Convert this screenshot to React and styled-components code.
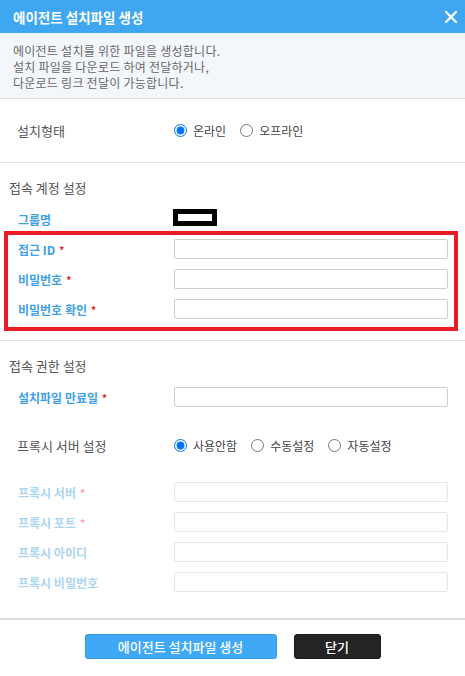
import React from "react";
import styled, { createGlobalStyle } from "styled-components";

const Global = createGlobalStyle`
  html, body { margin: 0; padding: 0; background: #fff; }
  body { font-family: "Noto Sans CJK KR", "Noto Sans", sans-serif; }
  * { box-sizing: border-box; }
`;

const Dialog = styled.div`
  width: 465px;
  height: 676px;
  background: #fff;
  display: flex;
  flex-direction: column;
`;

const Header = styled.div`
  height: 33px;
  background: #3fa7f1;
  display: flex;
  align-items: center;
  justify-content: space-between;
  padding: 0 8px 0 13px;
`;

const Title = styled.h1`
  margin: 0;
  font-size: 13.5px;
  font-weight: 700;
  color: #fff;
`;

const CloseBtn = styled.button`
  width: 12px;
  height: 12px;
  padding: 0;
  border: 0;
  background: none;
  display: flex;
  cursor: pointer;
`;

const Desc = styled.div`
  background: #f3f6fb;
  border-bottom: 1px solid #dcdcdc;
  padding: 10px 13px 7px;
  font-size: 12px;
  line-height: 16px;
  letter-spacing: 0.25px;
  color: #666;
`;

const Section = styled.section`
  position: relative;
  padding: ${(p) => p.$pad};
  border-bottom: ${(p) => (p.$last ? "none" : "1px solid #e0e0e0")};
`;

const SectionTitle = styled.h2`
  margin: 0 0 6px 9px;
  height: 20px;
  line-height: 20px;
  font-size: 13px;
  font-weight: 400;
  color: #555;
`;

const Row = styled.div`
  display: grid;
  grid-template-columns: 156px 1fr;
  align-items: center;
  height: 30px;
  padding: 0 17px 0 18px;
  margin-top: ${(p) => p.$mt || 0}px;
`;

const Label = styled.label`
  font-size: ${(p) => (p.$plain ? 13 : 12)}px;
  font-weight: ${(p) => (p.$plain ? 400 : 700)};
  color: ${(p) => (p.$plain ? "#555" : p.$faded ? "#acd5f4" : "#3fa0e6")};
  margin-left: ${(p) => (p.$plain ? -1 : 0)}px;
`;

const Star = styled.span`
  color: ${(p) => (p.$faded ? "#f2a3a3" : "#e01e1e")};
  font-size: 10px;
  font-weight: 700;
  margin-left: 4px;
  vertical-align: 1px;
`;

const Input = styled.input`
  width: 100%;
  height: 20px;
  border: 1px solid ${(p) => (p.$faded ? "#e6e6e6" : "#cfcfcf")};
  border-radius: 2px;
  background: #fff;
  padding: 0 4px;
  font-size: 12px;
  outline: none;
`;

const Radios = styled.div`
  display: flex;
  align-items: center;
  gap: 14px;
`;

const RadioItem = styled.label`
  display: flex;
  align-items: center;
  gap: 6px;
  font-size: 12px;
  color: #444;
  cursor: pointer;
`;

const Radio = styled.input`
  margin: 0;
  width: 13px;
  height: 13px;
`;

const Redact = styled.span`
  display: block;
  width: 44px;
  height: 17px;
  border: 5px solid #000;
  background: #fff;
  margin-left: -1px;
  margin-top: -3px;
`;

const Highlight = styled.div`
  position: absolute;
  left: 4px;
  right: 7px;
  top: 68px;
  height: 100px;
  border: 4px solid #ec1c24;
  pointer-events: none;
`;

const Spacer = styled.div`
  height: ${(p) => p.$h}px;
`;

const Footer = styled.div`
  border-top: 1px solid #dedede;
  padding-top: 14px;
  display: flex;
  justify-content: center;
  gap: 17px;
`;

const Button = styled.button`
  height: 25px;
  width: ${(p) => p.$w}px;
  border-radius: 3px;
  border: 1px solid ${(p) => (p.$dark ? "#1a1a1a" : "#3497e0")};
  background: ${(p) => (p.$dark ? "#242424" : "#3fa9f5")};
  color: #fff;
  font-family: inherit;
  font-size: 13px;
  font-weight: 500;
  padding: 0;
  cursor: pointer;
`;

const Field = ({ label, req, faded }) => (
  <Row>
    <Label $faded={faded}>
      {label}
      {req && <Star $faded={faded}>*</Star>}
    </Label>
    <Input $faded={faded} />
  </Row>
);

export default function App() {
  return (
    <>
      <Global />
      <Dialog>
        <Header>
          <Title>에이전트 설치파일 생성</Title>
          <CloseBtn aria-label="닫기">
            <svg width="12" height="12" viewBox="0 0 12 12">
              <path d="M1 1L11 11M11 1L1 11" stroke="#fff" strokeWidth="2.2" strokeLinecap="square" />
            </svg>
          </CloseBtn>
        </Header>
        <Desc>
          에이전트 설치를 위한 파일을 생성합니다.
          <br />
          설치 파일을 다운로드 하여 전달하거나,
          <br />
          다운로드 링크 전달이 가능합니다.
        </Desc>

        <Section $pad="16px 0 17px">
          <Row>
            <Label $plain>설치형태</Label>
            <Radios>
              <RadioItem>
                <Radio type="radio" name="type" defaultChecked />
                온라인
              </RadioItem>
              <RadioItem>
                <Radio type="radio" name="type" />
                오프라인
              </RadioItem>
            </Radios>
          </Row>
        </Section>

        <Section $pad="15px 0 16px">
          <SectionTitle>접속 계정 설정</SectionTitle>
          <Row>
            <Label>그룹명</Label>
            <Redact />
          </Row>
          <Field label="접근 ID" req />
          <Field label="비밀번호" req />
          <Field label="비밀번호 확인" req />
          <Highlight />
        </Section>

        <Section $pad="15px 0 21px">
          <SectionTitle>접속 권한 설정</SectionTitle>
          <Field label="설치파일 만료일" req />
          <Row $mt={18}>
            <Label $plain>프록시 서버 설정</Label>
            <Radios>
              <RadioItem>
                <Radio type="radio" name="proxy" defaultChecked />
                사용안함
              </RadioItem>
              <RadioItem>
                <Radio type="radio" name="proxy" />
                수동설정
              </RadioItem>
              <RadioItem>
                <Radio type="radio" name="proxy" />
                자동설정
              </RadioItem>
            </Radios>
          </Row>
          <Spacer $h={17} />
          <Field label="프록시 서버" req faded />
          <Field label="프록시 포트" req faded />
          <Field label="프록시 아이디" faded />
          <Field label="프록시 비밀번호" faded />
        </Section>

        <Footer>
          <Button $w={192}>에이전트 설치파일 생성</Button>
          <Button $w={87} $dark>닫기</Button>
        </Footer>
      </Dialog>
    </>
  );
}
